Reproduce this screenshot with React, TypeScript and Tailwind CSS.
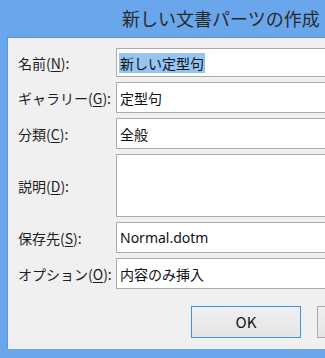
import React from "react";

const font = { fontFamily: '"Noto Sans CJK JP", "Noto Sans", sans-serif' };

function Label({ text, k, after }: { text: string; k: string; after?: string }) {
  return (
    <div className="w-[108px] pl-[10px] text-[14px] text-[#1e1e1e] leading-none flex items-center">
      <span>
        {text}(<span className="underline underline-offset-2">{k}</span>):
        {after}
      </span>
    </div>
  );
}

function Row({
  label,
  k,
  h,
  children,
}: {
  label: string;
  k: string;
  h: string;
  children?: React.ReactNode;
}) {
  return (
    <div className={`flex ${h}`}>
      <Label text={label} k={k} />
      <div className="flex-1 bg-white border border-[#ababab] flex items-center pl-[3px] text-[14px] text-[#111] leading-none">
        {children}
      </div>
    </div>
  );
}

export default function App() {
  return (
    <div
      className="w-[325px] h-[358px] bg-[#6aa6ec] flex flex-col overflow-hidden"
      style={font}
    >
      <div className="h-[37px] shrink-0 flex items-center pl-[122px] text-[18px] text-[#2a2a2a] whitespace-nowrap">
        新しい文書パーツの作成
      </div>
      <div className="ml-[7px] w-[420px] h-[312px] shrink-0 bg-[#f0f0f0] border-l border-t border-[#5b92d8] flex flex-col pt-[10px] gap-[5px]">
        <Row label="名前" k="N" h="h-[29px]">
          <span className="bg-[#94c4f2] px-[1px] py-[3px] -ml-[1px]">新しい定型句</span>
        </Row>
        <Row label="ギャラリー" k="G" h="h-[31px]">
          定型句
        </Row>
        <Row label="分類" k="C" h="h-[31px]">
          全般
        </Row>
        <Row label="説明" k="D" h="h-[63px]" />
        <Row label="保存先" k="S" h="h-[31px]">
          <span style={{ fontFamily: '"Noto Sans", sans-serif' }}>Normal.dotm</span>
        </Row>
        <Row label="オプション" k="O" h="h-[31px]">
          内容のみ挿入
        </Row>
        <div className="flex mt-[12px] pl-[183px] gap-[16px]">
          <div className="w-[112px] h-[32px] border border-[#3c95ea] bg-gradient-to-b from-[#f0f0f0] to-[#e5e5e5] flex items-center justify-center text-[15px] text-[#111]">
            OK
          </div>
          <div className="w-[112px] h-[32px] border border-[#acacac] bg-gradient-to-b from-[#f0f0f0] to-[#e5e5e5]" />
        </div>
      </div>
    </div>
  );
}
